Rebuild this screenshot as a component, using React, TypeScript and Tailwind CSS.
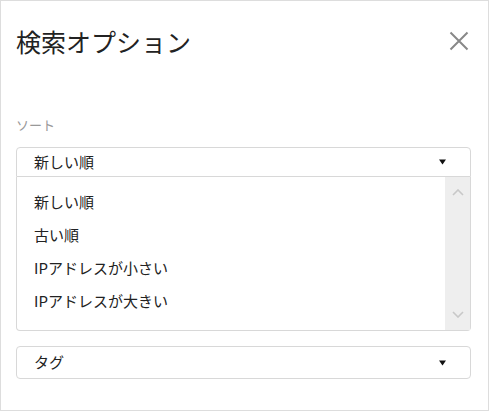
import React from 'react';

const OPTIONS = ['新しい順', '古い順', 'IPアドレスが小さい', 'IPアドレスが大きい'];

const Caret = () => (
  <svg width="7" height="6" viewBox="0 0 7 6" className="mr-[24px]">
    <path d="M0 0.5 H7 L3.5 5.5 Z" fill="#111" />
  </svg>
);

const Chevron = ({ down }: { down?: boolean }) => (
  <svg width="12" height="7" viewBox="0 0 12 7">
    <path
      d={down ? 'M1 1 L6 6 L11 1' : 'M1 6 L6 1 L11 6'}
      fill="none"
      stroke="#c8c8c8"
      strokeWidth="1.6"
    />
  </svg>
);

export default function App() {
  return (
    <div
      className="w-[489px] h-[411px] border border-[#dddddd] bg-white pl-[15px] pr-[17px] text-[#222]"
      style={{ fontFamily: '"Noto Sans CJK JP", "Noto Sans", sans-serif' }}
    >
      <div className="flex items-center justify-between h-[52px] mt-[14px]">
        <h1 className="text-[25px] leading-none font-normal">検索オプション</h1>
        <svg width="20" height="20" viewBox="0 0 20 20" className="mr-[2px]">
          <path d="M1.5 1.5 L18.5 18.5 M18.5 1.5 L1.5 18.5" stroke="#888" strokeWidth="2" />
        </svg>
      </div>

      <div className="mt-[51px] text-[13px] leading-none text-[#999]">ソート</div>

      <div className="mt-[16px]">
        <div className="h-[30px] flex items-center justify-between border border-[#d8d8d8] rounded-t-[4px] pl-[17px] text-[15px]">
          <span>新しい順</span>
          <Caret />
        </div>
        <div className="h-[154px] flex border-x border-b border-[#d8d8d8] rounded-b-[4px]">
          <ul className="flex-1 pt-[9px] pl-[17px] text-[15px]">
            {OPTIONS.map((o) => (
              <li key={o} className="h-[33px] flex items-center">
                {o}
              </li>
            ))}
          </ul>
          <div className="w-[25px] bg-[#eeeeee] flex flex-col items-center justify-between pt-[12px] pb-[12px]">
            <Chevron />
            <Chevron down />
          </div>
        </div>
      </div>

      <div className="mt-[15px] h-[33px] flex items-center justify-between border border-[#d8d8d8] rounded-[4px] pl-[17px] text-[15px]">
        <span>タグ</span>
        <Caret />
      </div>
    </div>
  );
}
